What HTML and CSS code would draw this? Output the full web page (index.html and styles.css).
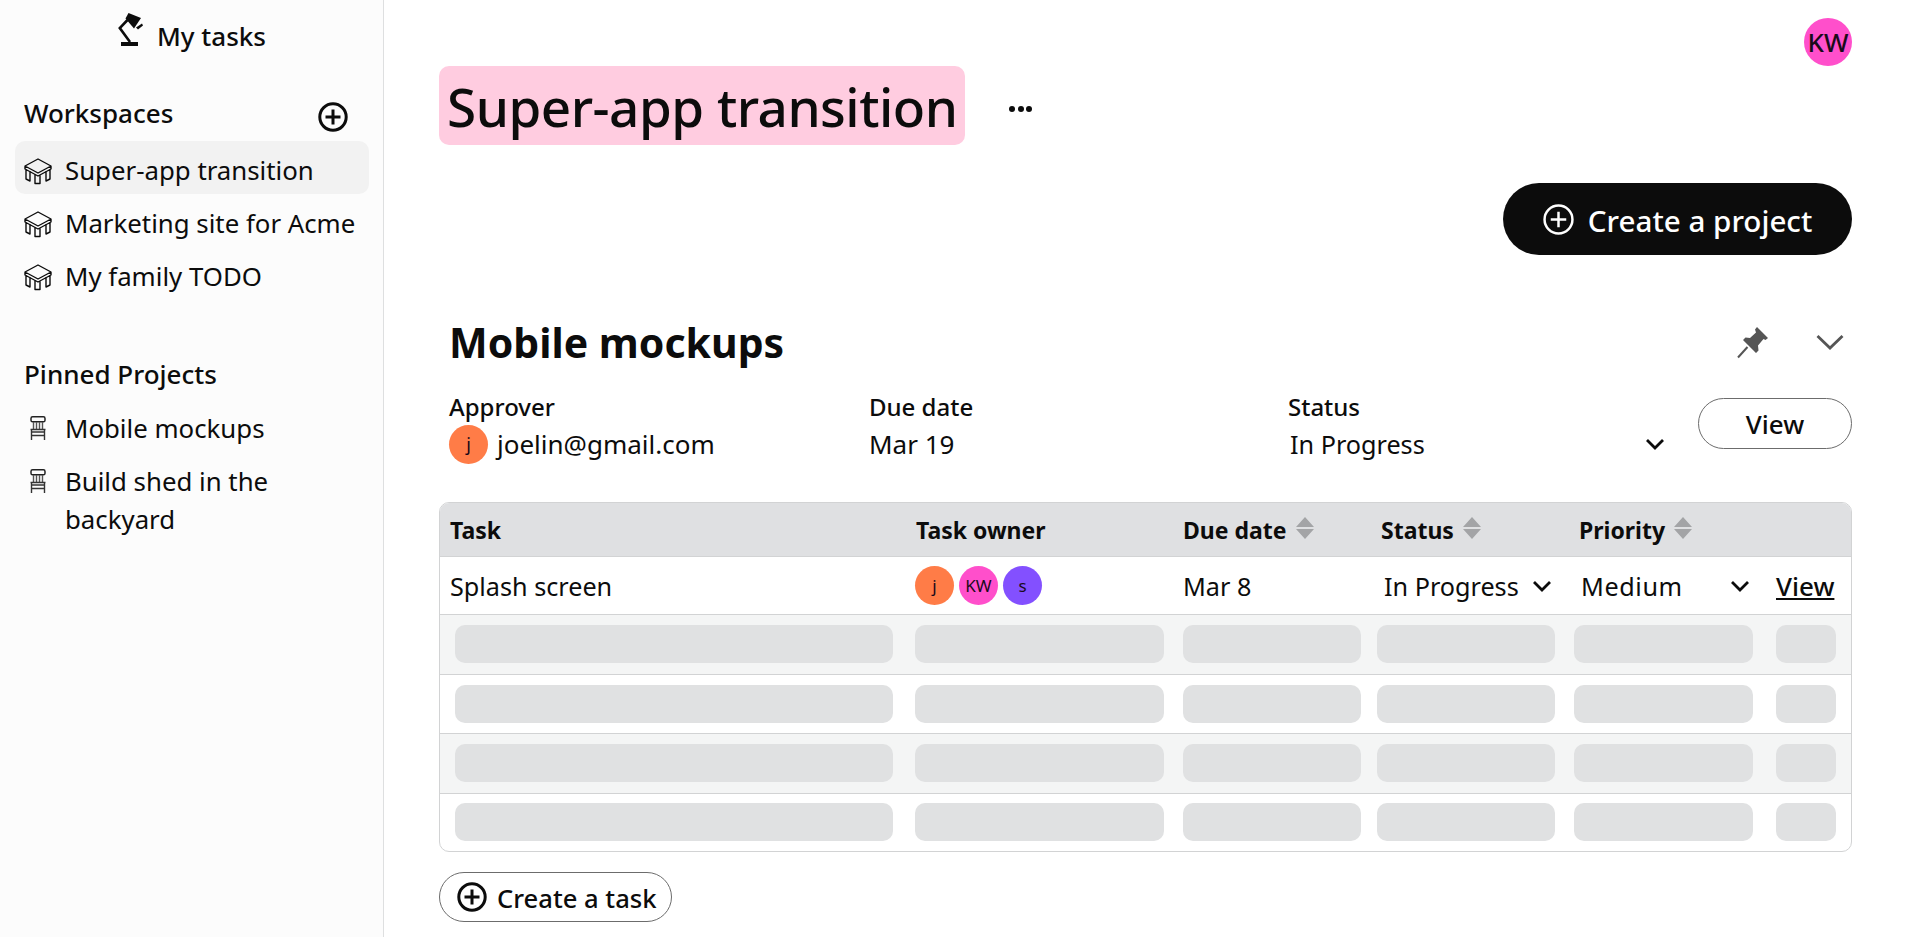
FILE: index.html
```html
<!DOCTYPE html>
<html lang="en">
<head>
<meta charset="utf-8">
<title>Super-app transition</title>
<link rel="stylesheet" href="styles.css">
</head>
<body>
<svg class="defs" width="0" height="0" aria-hidden="true">
  <defs>
    <symbol id="plus" viewBox="0 0 30 30">
      <circle cx="15" cy="15" r="13.2" fill="none" stroke="currentColor" stroke-width="3"/>
      <path d="M15 7.5v15M7.5 15h15" fill="none" stroke="currentColor" stroke-width="3"/>
    </symbol>
    <symbol id="plus-thin" viewBox="0 0 30 30">
      <circle cx="15" cy="15" r="13.5" fill="none" stroke="currentColor" stroke-width="2.4"/>
      <path d="M15 7.5v15M7.5 15h15" fill="none" stroke="currentColor" stroke-width="2.4"/>
    </symbol>
    <symbol id="table" viewBox="0 0 28 28">
      <path d="M14 2 27 9 14 16 1 9Z M1 9v3l13 7 13-7V9 M2 12v10l4 2V14 M26 12v10l-4 2V14 M11 17.5v9h5v-9" fill="none" stroke="currentColor" stroke-width="1.4" stroke-linejoin="round"/>
    </symbol>
    <symbol id="chair" viewBox="0 0 16 24">
      <rect x="1" y="0.8" width="14" height="5" rx="1.6" fill="none" stroke="#222" stroke-width="1.5"/>
      <path d="M3.5 6v7M6.5 6v7M9.5 6v7M12.5 6v7" stroke="#555" stroke-width="1.4" fill="none"/>
      <path d="M0.5 13.5h15M1 16h14M1.5 14v10M14.5 14v10M1.5 19.5h13" stroke="#333" stroke-width="1.4" fill="none"/>
    </symbol>
    <symbol id="chev" viewBox="0 0 18 12">
      <path d="M1 2l8 8 8-8" fill="none" stroke="currentColor" stroke-width="2.8"/>
    </symbol>
    <symbol id="chev-thin" viewBox="0 0 28 16">
      <path d="M1.5 2 14 14 26.5 2" fill="none" stroke="currentColor" stroke-width="2.8"/>
    </symbol>
    <symbol id="sort" viewBox="0 0 18 22">
      <path d="M9 0l9 10H0zM0 12h18l-9 10z" fill="#a3a4a6"/>
    </symbol>
  </defs>
</svg>

<div class="app">
  <aside class="sidebar">
    <div class="brand">
      <svg class="lamp" viewBox="0 0 26 35" aria-hidden="true">
        <path d="M3 30h17v4H3z" fill="currentColor"/>
        <path d="M12 30 1.8 16 9.5 8" fill="none" stroke="currentColor" stroke-width="2.6"/>
        <path d="M7.5 6.5 10.5 1 23 6 16 16.5Z" fill="currentColor"/>
        <path d="M18 15.5 24 11.5 25 13.5 20 17.5Z" fill="currentColor"/>
      </svg>
      <span>My tasks</span>
    </div>

    <div class="side-head workspaces-head">
      <h2>Workspaces</h2>
      <svg class="plus-side"><use href="#plus"/></svg>
    </div>
    <ul class="side-list">
      <li class="side-item active"><svg class="ico-table"><use href="#table"/></svg><span>Super-app transition</span></li>
      <li class="side-item"><svg class="ico-table"><use href="#table"/></svg><span>Marketing site for Acme</span></li>
      <li class="side-item"><svg class="ico-table"><use href="#table"/></svg><span>My family TODO</span></li>
    </ul>

    <div class="side-head pinned-head"><h2>Pinned Projects</h2></div>
    <ul class="side-list">
      <li class="side-item"><svg class="ico-chair"><use href="#chair"/></svg><span>Mobile mockups</span></li>
      <li class="side-item"><svg class="ico-chair"><use href="#chair"/></svg><span>Build shed in the backyard</span></li>
    </ul>
  </aside>

  <main class="main">
    <div class="topbar"><div class="avatar avatar-top pink">KW</div></div>

    <div class="title-row">
      <h1 class="title">Super-app transition</h1>
      <span class="dots"><i></i><i></i><i></i></span>
    </div>

    <div class="cta-row">
      <button class="btn-primary"><svg class="plus-cta"><use href="#plus-thin"/></svg><span>Create a project</span></button>
    </div>

    <section class="project">
      <div class="project-head">
        <h2 class="project-name">Mobile mockups</h2>
        <div class="project-actions">
          <svg class="pin" viewBox="0 0 34 34" aria-hidden="true">
            <path d="M21 2 32 13 29.5 15 27.5 14 22 20.5 22.5 25.5 20 28 7 15 9.5 12.5 14 13 20 7.5 19 4.5Z" fill="#555"/>
            <path d="M11.5 22 2 32.5" stroke="#555" stroke-width="2" fill="none"/>
          </svg>
          <svg class="chev-big"><use href="#chev-thin"/></svg>
        </div>
      </div>

      <div class="meta">
        <div class="meta-col approver">
          <div class="meta-label">Approver</div>
          <div class="meta-value"><span class="avatar avatar-sm orange">j</span>joelin@gmail.com</div>
        </div>
        <div class="meta-col due">
          <div class="meta-label">Due date</div>
          <div class="meta-value">Mar 19</div>
        </div>
        <div class="meta-col status">
          <div class="meta-label">Status</div>
          <div class="meta-value select"><span>In Progress</span><svg class="chev"><use href="#chev"/></svg></div>
        </div>
        <button class="btn-outline">View</button>
      </div>

      <div class="table">
        <div class="row head">
          <div>Task</div>
          <div>Task owner</div>
          <div>Due date<svg class="sort"><use href="#sort"/></svg></div>
          <div>Status<svg class="sort"><use href="#sort"/></svg></div>
          <div>Priority<svg class="sort"><use href="#sort"/></svg></div>
          <div></div>
        </div>
        <div class="row first">
          <div>Splash screen</div>
          <div class="owners">
            <span class="avatar avatar-sm orange">j</span>
            <span class="avatar avatar-sm pink">KW</span>
            <span class="avatar avatar-sm purple">s</span>
          </div>
          <div>Mar 8</div>
          <div class="cell-select"><span>In Progress</span><svg class="chev"><use href="#chev"/></svg></div>
          <div class="cell-select"><span class="medium">Medium</span><svg class="chev"><use href="#chev"/></svg></div>
          <div><a class="link" href="#">View</a></div>
        </div>
        <div class="skeleton-row shaded"><i></i><i></i><i></i><i></i><i></i><i></i></div>
        <div class="skeleton-row"><i></i><i></i><i></i><i></i><i></i><i></i></div>
        <div class="skeleton-row shaded"><i></i><i></i><i></i><i></i><i></i><i></i></div>
        <div class="skeleton-row last"><i></i><i></i><i></i><i></i><i></i><i></i></div>
      </div>

      <button class="btn-task"><svg class="plus-task"><use href="#plus"/></svg><span>Create a task</span></button>
    </section>
  </main>
</div>
</body>
</html>
```
FILE: styles.css
```css
* { box-sizing: border-box; }
html, body { margin: 0; height: 100%; }
body {
  font-family: "Noto Sans", "Open Sans", sans-serif;
  font-size: 26px;
  color: #0c0c0c;
  background: #fff;
  overflow: hidden;
}
.defs { position: absolute; }
.app { display: flex; height: 937px; }

.sidebar {
  width: 384px;
  flex: none;
  background: #fcfcfc;
  border-right: 1px solid #dedfe0;
  padding: 10px 14px 0 15px;
}
.brand {
  display: flex;
  justify-content: center;
  align-items: flex-start;
  gap: 13px;
  font-weight: 500;
  height: 48px;
}
.brand span { margin-top: 8px; line-height: 36px; }
.lamp { width: 26px; height: 35px; margin-top: 2px; flex: none; }
.side-head h2 { margin: 0; font-size: 26px; font-weight: 500; line-height: 36px; }
.workspaces-head {
  display: flex;
  justify-content: space-between;
  align-items: flex-start;
  padding: 37px 21px 0 9px;
  height: 83px;
}
.plus-side { width: 30px; height: 30px; margin-top: 7px; }
.pinned-head { padding: 56px 0 0 9px; height: 99px; }
.side-list { list-style: none; margin: 0; padding: 0; }
.side-item {
  display: flex;
  align-items: flex-start;
  padding: 9.5px 10px 5.5px 9px;
  font-size: 25.8px;
  line-height: 38px;
  border-radius: 10px;
}
.side-item.active { background: #f2f2f2; }
.ico-table { width: 28px; height: 28px; flex: none; margin: 6px 13px 0 0; }
.ico-chair { width: 16px; height: 24px; flex: none; margin: 7px 19px 0 6px; }

.main { flex: 1; padding: 0 54px 0 55px; min-width: 0; }
.topbar { display: flex; justify-content: flex-end; padding-top: 18px; height: 66px; }
.avatar {
  display: inline-flex;
  align-items: center;
  justify-content: center;
  border-radius: 50%;
  color: #1a0a1a;
  flex: none;
}
.avatar-top { width: 48px; height: 48px; font-size: 26px; font-weight: 500; }
.avatar-sm { width: 39px; height: 39px; font-size: 18px; }
.pink { background: #ff4fcb; }
.orange { background: #ff7c47; }
.purple { background: #8350ff; }

.title-row { display: flex; align-items: center; gap: 44px; }
.title {
  margin: 0;
  background: #ffcce0;
  border-radius: 10px;
  height: 79px;
  padding: 2px 8px 0 8px;
  font-size: 53px;
  letter-spacing: -0.5px;
  line-height: 77px;
  font-weight: 500;
  white-space: nowrap;
}
.dots { display: flex; gap: 2.5px; margin-top: 7px; }
.dots i { width: 6px; height: 6px; border-radius: 50%; background: #0c0c0c; }

.cta-row { display: flex; justify-content: flex-end; padding-top: 38px; }
.btn-primary {
  display: flex;
  align-items: center;
  justify-content: center;
  gap: 14px;
  width: 349px;
  height: 72px;
  border: 0;
  border-radius: 36px;
  background: #0c0c0c;
  color: #fff;
  font: 500 29.6px "Noto Sans", "Open Sans", sans-serif;
}
.btn-primary span { margin-top: 2px; }
.plus-cta { width: 31px; height: 31px; }

.project { padding-top: 61px; }
.project-head {
  display: flex;
  justify-content: space-between;
  align-items: center;
  padding: 0 8px 0 10px;
  height: 52px;
}
.project-name { margin: 0; font-size: 41px; font-weight: 700; line-height: 52px; }
.project-actions { display: flex; align-items: center; gap: 46px; }
.pin { width: 34px; height: 34px; }
.chev-big { width: 28px; height: 16px; color: #555; }

.meta {
  display: flex;
  align-items: flex-start;
  padding: 20px 0 0 10px;
  height: 134px;
}
.meta-col { line-height: 36px; }
.approver { width: 420px; }
.due { width: 419px; }
.status { width: 410px; }
.meta-label { font-size: 24px; font-weight: 500; line-height: 37px; }
.meta-value { display: flex; align-items: center; gap: 9px; line-height: 39px; }
.select { padding-left: 2px; justify-content: space-between; padding-right: 34px; font-size: 25.2px; }
.select .chev { margin-top: -2px; }
.chev { width: 18px; height: 12px; flex: none; }
.btn-outline {
  margin: 10px 0 0 0;
  width: 154px;
  height: 51px;
  background: #fff;
  border: 1px solid #6c6c6c;
  border-radius: 26px;
  color: #0c0c0c;
  font: 500 26px "Noto Sans", "Open Sans", sans-serif;
}

.table {
  border: 1px solid #d2d3d4;
  border-radius: 10px;
  overflow: hidden;
  width: 1413px;
}
.row {
  display: grid;
  grid-template-columns: 466px 267px 198px 198px 198px 83px;
  align-items: center;
  padding-left: 10px;
  border-bottom: 1px solid #d2d3d4;
}
.row > div { display: flex; align-items: center; min-width: 0; }
.head { height: 54px; background: #dfe0e2; font-size: 23px; font-weight: 700; }
.first { height: 58px; font-size: 25.2px; }
.sort { width: 18px; height: 22px; margin-left: 9px; margin-top: -4px; flex: none; }
.owners { gap: 5px; margin-left: -1px; }
.owners .avatar-sm { font-size: 17px; }
.cell-select { justify-content: space-between; padding: 0 28px 0 3px; }
.medium { letter-spacing: 0.6px; margin-left: -1px; }
.link { color: #0c0c0c; font-weight: 500; font-size: 26px; margin-left: -1px; text-decoration: underline; }

.skeleton-row {
  display: flex;
  align-items: center;
  height: 59.5px;
  padding-left: 15px;
  border-bottom: 1px solid #d2d3d4;
}
.skeleton-row.last { border-bottom: 0; height: 57px; }
.skeleton-row.shaded { background: #f4f5f5; }
.skeleton-row i { display: block; height: 38px; background: #e0e1e2; border-radius: 10px; flex: none; }
.skeleton-row i:nth-child(1) { width: 438px; }
.skeleton-row i:nth-child(2) { width: 249px; margin-left: 22px; }
.skeleton-row i:nth-child(3) { width: 178px; margin-left: 19px; }
.skeleton-row i:nth-child(4) { width: 178px; margin-left: 16px; }
.skeleton-row i:nth-child(5) { width: 179px; margin-left: 19px; }
.skeleton-row i:nth-child(6) { width: 60px; margin-left: 23px; }

.btn-task {
  display: flex;
  align-items: center;
  gap: 10px;
  margin-top: 20px;
  width: 233px;
  height: 50px;
  padding: 0 0 0 17px;
  background: #fff;
  border: 1px solid #6c6c6c;
  border-radius: 25px;
  color: #0c0c0c;
  font: 500 25.6px "Noto Sans", "Open Sans", sans-serif;
}
.btn-task span { margin-top: 3px; }
.plus-task { width: 30px; height: 30px; flex: none; }
```
